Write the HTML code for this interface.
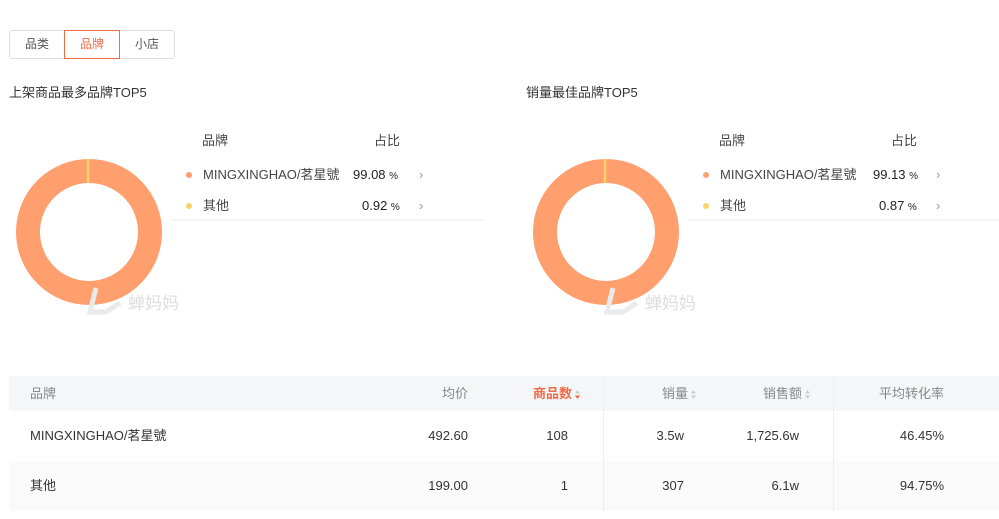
<!DOCTYPE html>
<html><head><meta charset="utf-8"><style>
body{margin:0;width:999px;height:519px;background:#fff;font-family:"Liberation Sans","Noto Sans CJK SC",sans-serif;color:#333;position:relative;overflow:hidden}
.a{position:absolute;white-space:nowrap;line-height:16px}
.tabs{left:9px;top:30px;height:27px;display:flex;border:1px solid #ddd;border-radius:3px;font-size:12px}
.tabs div{width:54px;text-align:center;line-height:26px;color:#555}
.tabs .on{border:1px solid #f06a45;color:#f06a45;margin:-1px 0;line-height:27px}
.t{font-size:13px;color:#333}
.h{font-size:13px;color:#444}
.r{font-size:13px;color:#444}
.dot{width:6px;height:6px;border-radius:50%}
.th{font-size:13px;color:#888}
.td{font-size:13px;color:#333}
.s{display:inline-block;width:5px;height:9px;vertical-align:-1px;margin-left:3px}
</style></head><body>
<div class="a tabs"><div>品类</div><div class="on">品牌</div><div>小店</div></div>

<div class="a t" style="left:9px;top:85px">上架商品最多品牌TOP5</div>
<div class="a t" style="left:526px;top:85px">销量最佳品牌TOP5</div>

<svg class="a" style="left:0;top:0" width="999" height="330">
<circle cx="89" cy="232" r="61" fill="none" stroke="#ff9f6d" stroke-width="24"/>
<line x1="88" y1="159" x2="88" y2="183" stroke="#f8d36b" stroke-width="2.5"/>
<circle cx="606" cy="232" r="61" fill="none" stroke="#ff9f6d" stroke-width="24"/>
<line x1="605" y1="159" x2="605" y2="183" stroke="#f8d36b" stroke-width="2.5"/>
<line x1="170" y1="220" x2="485" y2="220" stroke="#eee"/>
<line x1="687" y1="220" x2="999" y2="220" stroke="#eee"/>
<path d="M96 288 l-6 24 h16 l14 -9" fill="none" stroke="#eaeaea" stroke-width="5"/>
<path d="M613 288 l-6 24 h16 l14 -9" fill="none" stroke="#eaeaea" stroke-width="5"/>
</svg>
<div class="a" style="left:128px;top:294px;font-size:17px;color:#ddd;line-height:20px">蝉妈妈</div>
<div class="a" style="left:645px;top:294px;font-size:17px;color:#ddd;line-height:20px">蝉妈妈</div>

<div class="a h" style="left:202px;top:133px">品牌</div>
<div class="a h" style="left:374px;top:133px">占比</div>
<div class="a dot" style="left:186px;top:172px;background:#ff9f6d"></div>
<div class="a r" style="left:203px;top:167px">MINGXINGHAO/茗星號</div>
<div class="a r" style="left:353px;top:167px;color:#222">99.08 <span style="font-size:10px">%</span></div>
<div class="a r" style="left:419px;top:167px;color:#999">›</div>
<div class="a dot" style="left:186px;top:203px;background:#f8d36b"></div>
<div class="a r" style="left:203px;top:198px">其他</div>
<div class="a r" style="left:362px;top:198px;color:#222">0.92 <span style="font-size:10px">%</span></div>
<div class="a r" style="left:419px;top:198px;color:#999">›</div>

<div class="a h" style="left:719px;top:133px">品牌</div>
<div class="a h" style="left:891px;top:133px">占比</div>
<div class="a dot" style="left:703px;top:172px;background:#ff9f6d"></div>
<div class="a r" style="left:720px;top:167px">MINGXINGHAO/茗星號</div>
<div class="a r" style="left:873px;top:167px;color:#222">99.13 <span style="font-size:10px">%</span></div>
<div class="a r" style="left:936px;top:167px;color:#999">›</div>
<div class="a dot" style="left:703px;top:203px;background:#f8d36b"></div>
<div class="a r" style="left:720px;top:198px">其他</div>
<div class="a r" style="left:879px;top:198px;color:#222">0.87 <span style="font-size:10px">%</span></div>
<div class="a r" style="left:936px;top:198px;color:#999">›</div>

<div class="a" style="left:9px;top:376px;width:990px;height:35px;background:#f5f6f8"></div>
<div class="a" style="left:9px;top:461px;width:990px;height:50px;background:#fafafa"></div>
<div class="a" style="left:603px;top:376px;width:1px;height:135px;background:#eee"></div>
<div class="a" style="left:833px;top:376px;width:1px;height:135px;background:#eee"></div>

<div class="a th" style="left:30px;top:386px">品牌</div>
<div class="a th" style="right:531px;top:386px">均价</div>
<div class="a th" style="right:419px;top:386px;color:#f06a45;font-weight:bold">商品数<svg class="s" viewBox="0 0 5 9"><path d="M0 3.5L2.5 0L5 3.5Z" fill="#ccc"/><path d="M0 5.5L2.5 9L5 5.5Z" fill="#f06a45"/></svg></div>
<div class="a th" style="right:303px;top:386px">销量<svg class="s" viewBox="0 0 5 9"><path d="M0 3.5L2.5 0L5 3.5Z" fill="#ccc"/><path d="M0 5.5L2.5 9L5 5.5Z" fill="#ccc"/></svg></div>
<div class="a th" style="right:189px;top:386px">销售额<svg class="s" viewBox="0 0 5 9"><path d="M0 3.5L2.5 0L5 3.5Z" fill="#ccc"/><path d="M0 5.5L2.5 9L5 5.5Z" fill="#ccc"/></svg></div>
<div class="a th" style="right:55px;top:386px">平均转化率</div>

<div class="a td" style="left:30px;top:428px">MINGXINGHAO/茗星號</div>
<div class="a td" style="right:531px;top:428px">492.60</div>
<div class="a td" style="right:431px;top:428px">108</div>
<div class="a td" style="right:315px;top:428px">3.5w</div>
<div class="a td" style="right:200px;top:428px">1,725.6w</div>
<div class="a td" style="right:55px;top:428px">46.45%</div>

<div class="a td" style="left:30px;top:478px">其他</div>
<div class="a td" style="right:531px;top:478px">199.00</div>
<div class="a td" style="right:431px;top:478px">1</div>
<div class="a td" style="right:315px;top:478px">307</div>
<div class="a td" style="right:200px;top:478px">6.1w</div>
<div class="a td" style="right:55px;top:478px">94.75%</div>
</body></html>
